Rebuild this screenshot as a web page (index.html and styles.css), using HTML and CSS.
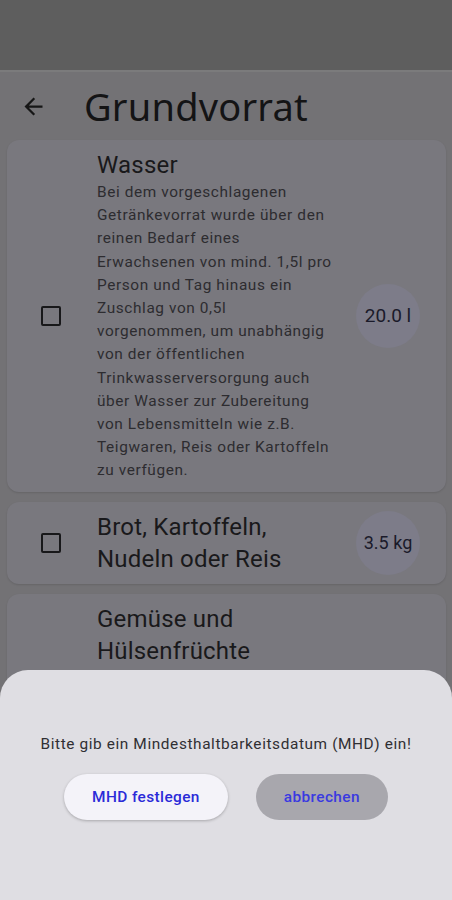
FILE: index.html
```html
<!DOCTYPE html>
<html lang="de">
<head>
<meta charset="utf-8">
<title>Grundvorrat</title>
<link rel="stylesheet" href="styles.css">
</head>
<body>
<div class="screen">
  <div class="statusbar"></div>
  <header class="appbar">
    <svg class="back" viewBox="0 0 24 24" aria-hidden="true"><path d="M20 11H7.83l5.59-5.59L12 4l-8 8 8 8 1.41-1.41L7.83 13H20v-2z"/></svg>
    <h1 class="title">Grundvorrat</h1>
  </header>
  <main class="list">
    <section class="card">
      <div class="check-cell"><span class="checkbox"></span></div>
      <div class="text">
        <div class="item-title">Wasser</div>
        <p class="desc">Bei dem vorgeschlagenen Getränkevorrat wurde über den reinen Bedarf eines Erwachsenen von mind. 1,5l pro Person und Tag hinaus ein Zuschlag von 0,5l vorgenommen, um unabhängig von der öffentlichen Trinkwasserversorgung auch über Wasser zur Zubereitung von Lebensmitteln wie z.B. Teigwaren, Reis oder Kartoffeln zu verfügen.</p>
      </div>
      <div class="badge">20.0 l</div>
    </section>
    <section class="card">
      <div class="check-cell"><span class="checkbox"></span></div>
      <div class="text">
        <div class="item-title">Brot, Kartoffeln, Nudeln oder Reis</div>
      </div>
      <div class="badge badge-sm">3.5 kg</div>
    </section>
    <section class="card card-tall">
      <div class="check-cell"></div>
      <div class="text">
        <div class="item-title">Gemüse und Hülsenfrüchte</div>
      </div>
    </section>
  </main>
  <div class="sheet">
    <p class="sheet-text">Bitte gib ein Mindesthaltbarkeitsdatum (MHD) ein!</p>
    <div class="actions">
      <button class="btn btn-primary">MHD festlegen</button>
      <button class="btn btn-secondary">abbrechen</button>
    </div>
  </div>
</div>
</body>
</html>
```

FILE: styles.css
```css
* { box-sizing: border-box; }
html, body {
  margin: 0;
  padding: 0;
  width: 452px;
  height: 900px;
  overflow: hidden;
  background: #737275;
  font-family: Roboto, "Noto Sans", sans-serif;
}
.screen {
  position: relative;
  width: 452px;
  height: 900px;
  overflow: hidden;
}
.statusbar {
  height: 72px;
  background: #5e5e5e;
  border-bottom: 2px solid #7b7b7c;
}
.appbar {
  height: 68px;
  display: flex;
  align-items: center;
  padding-left: 20px;
}
.back {
  width: 27px;
  height: 27px;
  fill: #161616;
  flex: none;
}
.title {
  margin: 0 0 0 37px;
  font-family: "Noto Sans", Roboto, sans-serif;
  font-weight: 400;
  font-size: 38px;
  line-height: 44px;
  color: #141415;
  letter-spacing: 0.2px;
}
.list {
  display: flex;
  flex-direction: column;
  gap: 10px;
  padding: 0 6px 0 7px;
}
.card {
  display: flex;
  align-items: center;
  background: #79787e;
  border-radius: 12px;
  padding: 9px 26px 9px 0;
  box-shadow: 0 1px 2px rgba(0,0,0,0.12);
}
.card-tall {
  align-items: flex-start;
  min-height: 320px;
}
.card-tall .text {
  padding-right: 84px;
}
.check-cell {
  width: 88px;
  flex: none;
  display: flex;
  justify-content: center;
}
.checkbox {
  width: 20px;
  height: 20px;
  border: 2px solid #18181a;
  border-radius: 2px;
}
.text {
  flex: 1;
  min-width: 0;
  padding: 0 20px 0 2px;
}
.item-title {
  font-size: 24px;
  line-height: 32px;
  color: #19191b;
  letter-spacing: 0.2px;
}
.desc {
  margin: 0;
  font-size: 15.4px;
  line-height: 23.2px;
  letter-spacing: 0.6px;
  color: #2d2c30;
}
.badge {
  flex: none;
  width: 64px;
  height: 64px;
  border-radius: 50%;
  background: #7d7c89;
  display: flex;
  align-items: center;
  justify-content: center;
  font-size: 19px;
  color: #1a1a2a;
}
.badge-sm { font-size: 18px; }
.sheet {
  position: absolute;
  left: 0;
  right: 0;
  top: 670px;
  bottom: 0;
  background: #dfdee3;
  border-radius: 28px 28px 0 0;
  padding-top: 64px;
  display: flex;
  flex-direction: column;
  align-items: center;
}
.sheet-text {
  margin: 0;
  font-size: 15.4px;
  line-height: 20px;
  letter-spacing: 0.6px;
  color: #302f33;
}
.actions {
  margin-top: 20px;
  display: flex;
  gap: 28px;
}
.btn {
  height: 46px;
  padding: 0 28px;
  border: none;
  border-radius: 23px;
  font-family: Roboto, sans-serif;
  font-weight: 500;
  font-size: 15.4px;
  letter-spacing: 0.4px;
}
.btn-primary {
  background: #f4f3f9;
  color: #2b2bd8;
  box-shadow: 0 1px 3px rgba(0,0,0,0.25);
}
.btn-secondary {
  background: #a8a7ad;
  color: #3a3ae0;
}
```
